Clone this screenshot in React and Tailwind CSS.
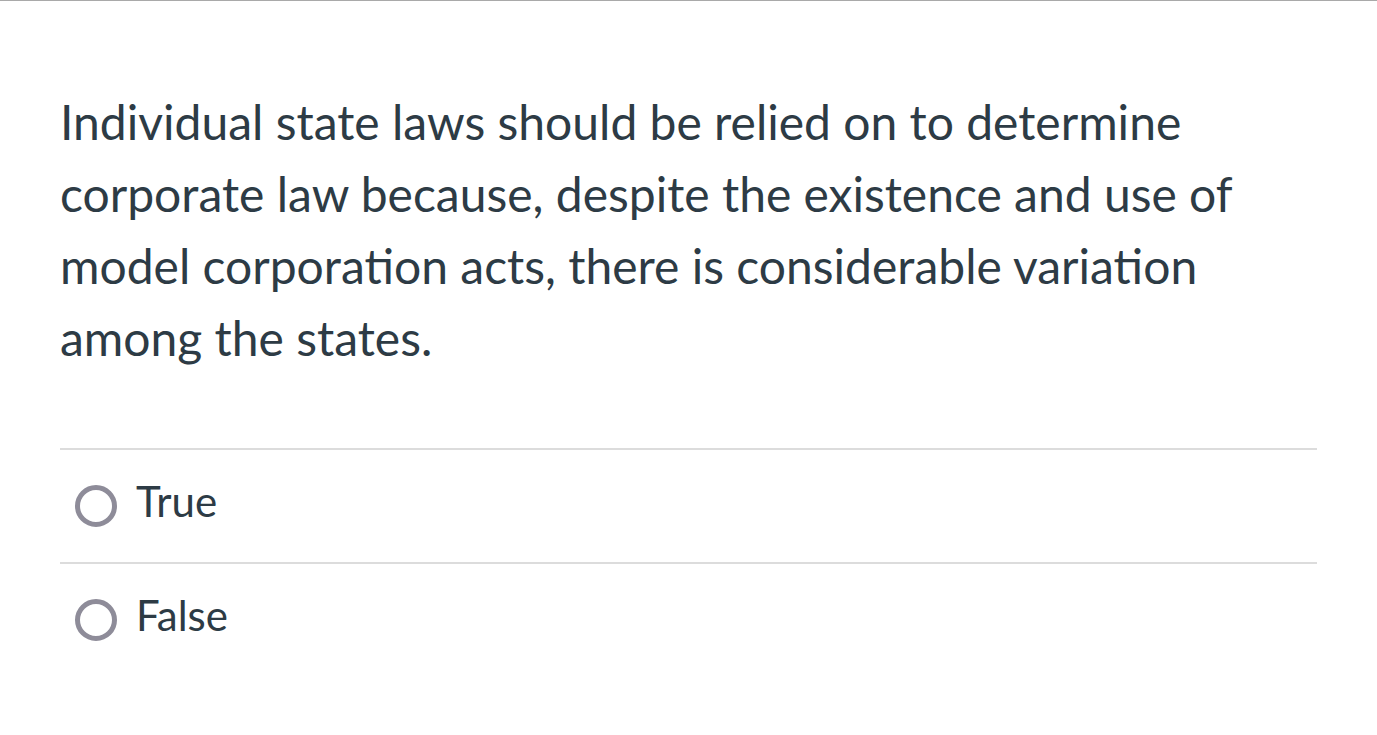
import React from "react";

const options = ["True", "False"];

const App = () => {
  return (
    <div className="min-h-screen bg-white border-t border-[#a9a9a9] font-['Lato',sans-serif] text-[#2d3b45]">
      <div className="px-[60px] pt-[85px]">
        <p className="text-[48px] leading-[72px] pr-[80px]">
          Individual state laws should be relied on to determine corporate law because, despite the existence and use of model corporation acts, there is considerable variation among the states.
        </p>

        <div className="mt-[74px]">
          {options.map((opt) => (
            <label
              key={opt}
              className="flex items-center h-[114px] border-t-2 border-[#dcdcdc] cursor-pointer"
            >
              <span className="ml-[15px] w-[42px] h-[42px] rounded-full border-[5px] border-[#8e8c99] shrink-0"></span>
              <span className="ml-[19px] text-[42px] leading-none pb-[10px]">{opt}</span>
            </label>
          ))}
        </div>
      </div>
    </div>
  );
};

export default App;
